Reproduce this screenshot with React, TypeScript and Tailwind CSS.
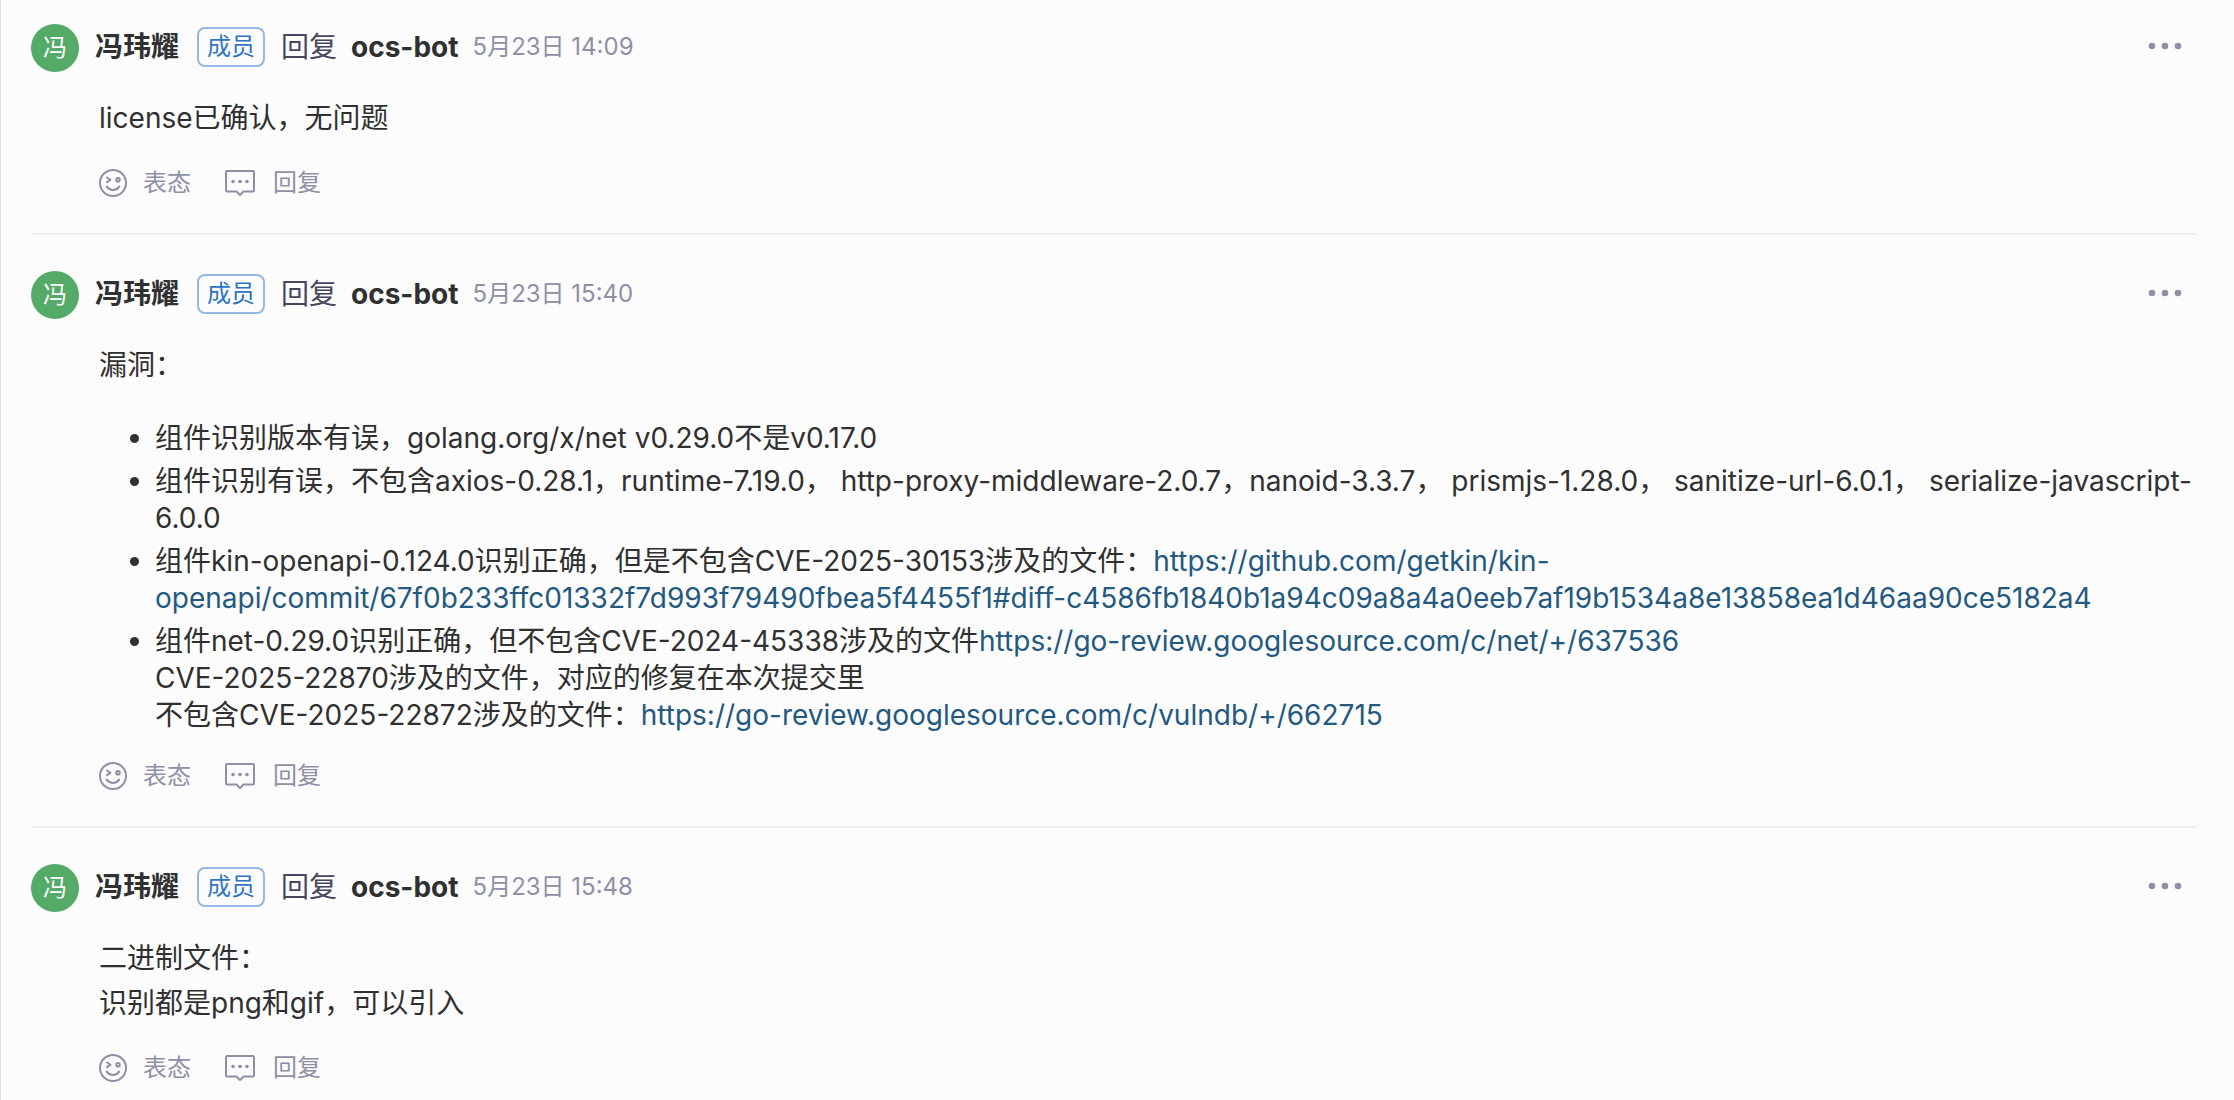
import type { ReactNode } from "react";

const FONT = "font-['Inter','Noto_Sans_CJK_SC',sans-serif]";

type CommentData = {
  id: string;
  time: string;
  body: ReactNode;
};

function SmileIcon() {
  return (
    <svg
      viewBox="0 0 28 28"
      className="size-7"
      fill="none"
      stroke="currentColor"
      strokeWidth="2"
      strokeLinecap="round"
      strokeLinejoin="round"
      aria-hidden="true"
    >
      <circle cx="14" cy="14" r="13" />
      <path d="M8 8.500l3.400 2.400L8 13.200" />
      <circle cx="19" cy="10.800" r="1.800" />
      <path d="M7.800 17.600c1.400 2.100 3.600 3.300 6.200 3.300s4.800-1.200 6.200-3.300" />
    </svg>
  );
}

function ReplyIcon() {
  return (
    <svg
      viewBox="0 0 30 28"
      className="h-7 w-[30px]"
      fill="none"
      stroke="currentColor"
      strokeWidth="2"
      strokeLinejoin="round"
      aria-hidden="true"
    >
      <path d="M2 2h26a1 1 0 0 1 1 1v18.500a1 1 0 0 1-1 1h-9.500L15 26l-3.500-3.500H2a1 1 0 0 1-1-1V3a1 1 0 0 1 1-1z" />
      <g fill="currentColor" stroke="none">
        <circle cx="8" cy="12.500" r="1.800" />
        <circle cx="15" cy="12.500" r="1.800" />
        <circle cx="22" cy="12.500" r="1.800" />
      </g>
    </svg>
  );
}

function MoreIcon() {
  return (
    <svg viewBox="0 0 34 8" className="h-2 w-[34px]" fill="currentColor" aria-hidden="true">
      <circle cx="4" cy="4" r="3.300" />
      <circle cx="17" cy="4" r="3.300" />
      <circle cx="30" cy="4" r="3.300" />
    </svg>
  );
}

function TextLink({ href }: { href: string }) {
  return (
    <a href={href} className="text-[#24597f] hover:underline">
      {href}
    </a>
  );
}

const comments: CommentData[] = [
  {
    id: "license",
    time: "5月23日 14:09",
    body: <p>license已确认，无问题</p>,
  },
  {
    id: "vulnerability",
    time: "5月23日 15:40",
    body: (
      <>
        <p>漏洞：</p>
        <ul className="mt-8 flex list-disc flex-col gap-1.5 pl-14 leading-[37px]">
          <li>组件识别版本有误，golang.org/x/net v0.29.0不是v0.17.0</li>
          <li>
            组件识别有误，不包含axios-0.28.1，runtime-7.19.0， http-proxy-middleware-2.0.7，nanoid-3.3.7，
            prismjs-1.28.0， sanitize-url-6.0.1， serialize-javascript-6.0.0
          </li>
          <li>
            组件kin-openapi-0.124.0识别正确，但是不包含CVE-2025-30153涉及的文件：
            <TextLink href="https://github.com/getkin/kin-openapi/commit/67f0b233ffc01332f7d993f79490fbea5f4455f1#diff-c4586fb1840b1a94c09a8a4a0eeb7af19b1534a8e13858ea1d46aa90ce5182a4" />
          </li>
          <li>
            组件net-0.29.0识别正确，但不包含CVE-2024-45338涉及的文件
            <TextLink href="https://go-review.googlesource.com/c/net/+/637536" />
            <br />
            CVE-2025-22870涉及的文件，对应的修复在本次提交里
            <br />
            不包含CVE-2025-22872涉及的文件：
            <TextLink href="https://go-review.googlesource.com/c/vulndb/+/662715" />
          </li>
        </ul>
      </>
    ),
  },
  {
    id: "binary",
    time: "5月23日 15:48",
    body: (
      <>
        <p>二进制文件：</p>
        <p>识别都是png和gif，可以引入</p>
      </>
    ),
  },
];

function Comment({ time, body }: Omit<CommentData, "id">) {
  return (
    <article className="border-b-2 border-[#eeeef3] pt-9 pb-[30px] first:pt-6 last:border-b-0 last:pb-3">
      <header className="flex h-12 items-center">
        <span className="flex size-12 shrink-0 items-center justify-center rounded-full bg-[#54ab68] text-2xl text-white">
          冯
        </span>
        <div className="ml-4 flex items-center pb-0.5">
          <span className="text-[28px] leading-[44px] font-bold">冯玮耀</span>
          <span className="ml-[18px] flex h-10 w-[68px] items-center justify-center rounded-lg border-2 border-[#93b9e0] text-2xl text-[#2f74c5]">
            成员
          </span>
          <span className="ml-4 text-[28px] leading-[44px] text-[#45475e]">回复</span>
          <span className="ml-3.5 text-[28px] leading-[44px] font-bold">ocs-bot</span>
          <time className="ml-3.5 text-2xl text-[#8e91a5]">{time}</time>
        </div>
        <button type="button" aria-label="更多" className="mr-[11px] ml-auto p-1 pb-2 text-[#8e91a5]">
          <MoreIcon />
        </button>
      </header>

      {/* Content is indented to line up with the author name */}
      <div className="pt-6 pl-[68px] text-[28px] leading-[45px]">{body}</div>

      <footer className="mt-[22px] flex h-10 items-center gap-[34px] pl-[68px] text-2xl text-[#8e91a5]">
        <button type="button" className="flex items-center gap-4">
          <SmileIcon />
          表态
        </button>
        <button type="button" className="flex items-center gap-[18px]">
          <ReplyIcon />
          回复
        </button>
      </footer>
    </article>
  );
}

export default function App() {
  return (
    <main
      lang="zh-CN"
      className={`min-h-screen border-l border-[#dfdfe6] bg-[#fcfcfc] pr-[37px] pl-[30px] text-[#303030] ${FONT}`}
    >
      {comments.map((c) => (
        <Comment key={c.id} time={c.time} body={c.body} />
      ))}
    </main>
  );
}
